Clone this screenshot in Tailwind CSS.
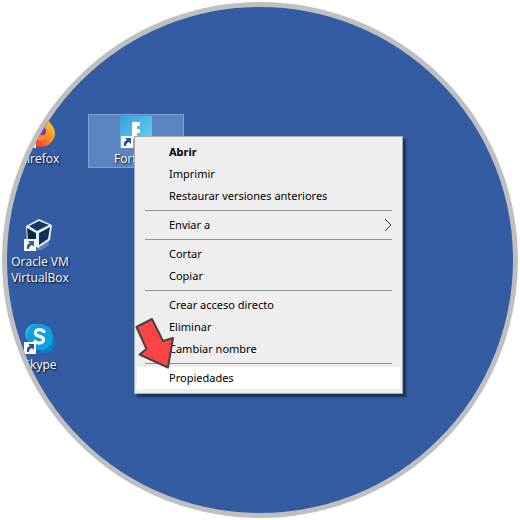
<!DOCTYPE html>
<html lang="es">
<head>
    <meta charset="UTF-8">
    <meta name="viewport" content="width=device-width, initial-scale=1.0">
    <title>Escritorio</title>
    <script src="https://cdn.jsdelivr.net/npm/@tailwindcss/browser@4"></script>
</head>
<body class="bg-white p-0.5 font-['Open_Sans','Noto_Sans',sans-serif] text-[12px] leading-4 text-black">
    <!-- Desktop -->
    <main class="relative aspect-square w-full overflow-hidden rounded-full border-5 border-[#bfbfbf] bg-[#335ca3]">

        <!-- Desktop icons -->
        <button class="absolute top-[107px] -left-[14px] flex w-[94px] flex-col items-center gap-[3px] border border-transparent pt-px text-white text-shadow-[1px_1px_2px_#000]">
            <svg class="size-8" viewBox="0 0 32 32" aria-hidden="true">
                <defs>
                    <linearGradient id="fox" x1="1" y1="0" x2="0" y2="1">
                        <stop offset="0" stop-color="#ffe03f"/>
                        <stop offset=".4" stop-color="#ff9a1f"/>
                        <stop offset=".75" stop-color="#fb3f3c"/>
                        <stop offset="1" stop-color="#e0208a"/>
                    </linearGradient>
                </defs>
                <path fill="url(#fox)" d="M16 3 L20 5 L20 0 Q25 4 27 8 Q33 15 30 22 Q26 31 16 31 Q4 31 1 18 Q1 9 7 5Z"/>
                <circle cx="16" cy="15" r="6" fill="#7a35c9"/>
                <path fill="#ff8a20" d="M8 10 Q14 8 17 12 Q12 13 15 18 Q19 21 23 17 Q21 26 14 24 Q7 21 8 10Z"/>
                <path fill="#fff" d="M0 20h12v12H0z"/>
                <path fill="#24549b" d="M4 22h6v6l-2-2q-3 1-3 4H3q-1-5 3-6z"/>
            </svg>
            <span>Firefox</span>
        </button>

        <button class="absolute top-[107px] left-[81px] flex h-[54px] w-[96px] flex-col items-center gap-[3px] border border-[#7fa3d6] bg-[#5c85c0] pt-px text-white text-shadow-[1px_1px_2px_#000]">
            <svg class="size-8 shrink-0" viewBox="0 0 32 32" aria-hidden="true">
                <defs>
                    <linearGradient id="fort" x1="0" y1="0" x2="1" y2="1">
                        <stop offset="0" stop-color="#3ba0dc"/>
                        <stop offset="1" stop-color="#66d8f6"/>
                    </linearGradient>
                </defs>
                <path fill="url(#fort)" d="M0 0h32v32H0z"/>
                <path fill="#fff" d="M12 6h8v4h-3v3h3v4h-3v6l-5-1z"/>
                <path fill="#fff" d="M1 20h12v12H1z"/>
                <path fill="#24549b" d="M5 22h6v6l-2-2q-3 1-3 4H4q-1-5 3-6z"/>
            </svg>
            <span>Fortnite</span>
        </button>

        <button class="absolute top-[210px] -left-[14px] flex w-[94px] flex-col items-center gap-[3px] border border-transparent pt-px text-white text-shadow-[1px_1px_2px_#000]">
            <svg class="size-8" viewBox="0 0 32 32" aria-hidden="true">
                <path fill="#5f82b8" d="M14 28 L25 21 L25 26 L18 31 L12 31Z"/>
                <path fill="#e9f0f6" d="M2 7 L15 0 L28 6 L26 21 L14 29 L3 22Z"/>
                <path fill="#123a63" d="M5 7 L15 2 L25 6 L13 12Z"/>
                <path fill="#0c2645" d="M3 9 L12 14 L12 27 L4 21Z"/>
                <path fill="#0f3258" d="M15 14 L26 8 L24 20 L15 26Z"/>
                <path fill="#fff" d="M0 20h12v12H0z"/>
                <path fill="#24649b" d="M4 22h6v6l-2-2q-3 1-3 4H3q-1-5 3-6z"/>
            </svg>
            <span>Oracle VM<br>VirtualBox</span>
        </button>

        <button class="absolute top-[313px] -left-[14px] flex w-[94px] flex-col items-center gap-[3px] border border-transparent pt-px text-white text-shadow-[1px_1px_2px_#000]">
            <svg class="size-8" viewBox="0 0 32 32" aria-hidden="true">
                <circle cx="11" cy="12" r="10" fill="#28b5ec"/>
                <circle cx="21" cy="21" r="10" fill="#0a7fc8"/>
                <circle cx="16" cy="15" r="13" fill="#0da2dd"/>
                <path fill="none" stroke="#fff" stroke-width="3.2" stroke-linecap="round" d="M20 9.500 Q16 6.500 12.500 8.500 Q10 11.500 13 13.500 L17.500 15 Q21 17 18.500 20 Q15 22.500 11 19.500"/>
                <path fill="#fff" d="M0 20h12v12H0z"/>
                <path fill="#24549b" d="M4 22h6v6l-2-2q-3 1-3 4H3q-1-5 3-6z"/>
            </svg>
            <span>Skype</span>
        </button>

        <!-- Context menu -->
        <div role="menu" class="absolute top-[129px] left-[127px] flex w-[269px] flex-col border border-[#a8acb0] bg-[#eeeeee] px-0.5 py-1 font-['Noto_Sans','Open_Sans',sans-serif] text-[11px] shadow-[3px_3px_2px_#1c3256]">
            <button role="menuitem" class="h-[22px] pl-8 text-left font-bold">Abrir</button>
            <button role="menuitem" class="h-[22px] pl-8 text-left">Imprimir</button>
            <button role="menuitem" class="h-[22px] pl-8 text-left">Restaurar versiones anteriores</button>
            <hr class="mx-2 my-[3px] border-[#909090]">
            <button role="menuitem" aria-haspopup="menu" class="flex h-[22px] items-center justify-between pr-2 pl-8 text-left">
                Enviar a
                <svg class="h-3.5 w-2" viewBox="0 0 8 14" fill="none" stroke="#333" aria-hidden="true"><path d="M1 1l6 6-6 6"/></svg>
            </button>
            <hr class="mx-2 my-[3px] border-[#909090]">
            <button role="menuitem" class="h-[22px] pl-8 text-left">Cortar</button>
            <button role="menuitem" class="h-[22px] pl-8 text-left">Copiar</button>
            <hr class="mx-2 my-[3px] border-[#909090]">
            <button role="menuitem" class="h-[22px] pl-8 text-left">Crear acceso directo</button>
            <button role="menuitem" class="h-[22px] pl-8 text-left">Eliminar</button>
            <button role="menuitem" class="h-[22px] pl-8 text-left">Cambiar nombre</button>
            <hr class="mx-2 my-[3px] border-[#909090]">
            <button role="menuitem" class="h-[22px] bg-white pl-8 text-left">Propiedades</button>
        </div>

        <!-- Pointer arrow -->
        <svg class="absolute top-[309px] left-[127px] h-[54px] w-[42px]" viewBox="0 0 42 54" aria-hidden="true">
            <path fill="#fb4545" stroke="#444" stroke-width="2" stroke-linejoin="round" d="M18 3 L2.500 11 L12.500 33 L5.500 38.500 L34 51.500 L39 22 L29 25Z"/>
        </svg>
    </main>
</body>
</html>
